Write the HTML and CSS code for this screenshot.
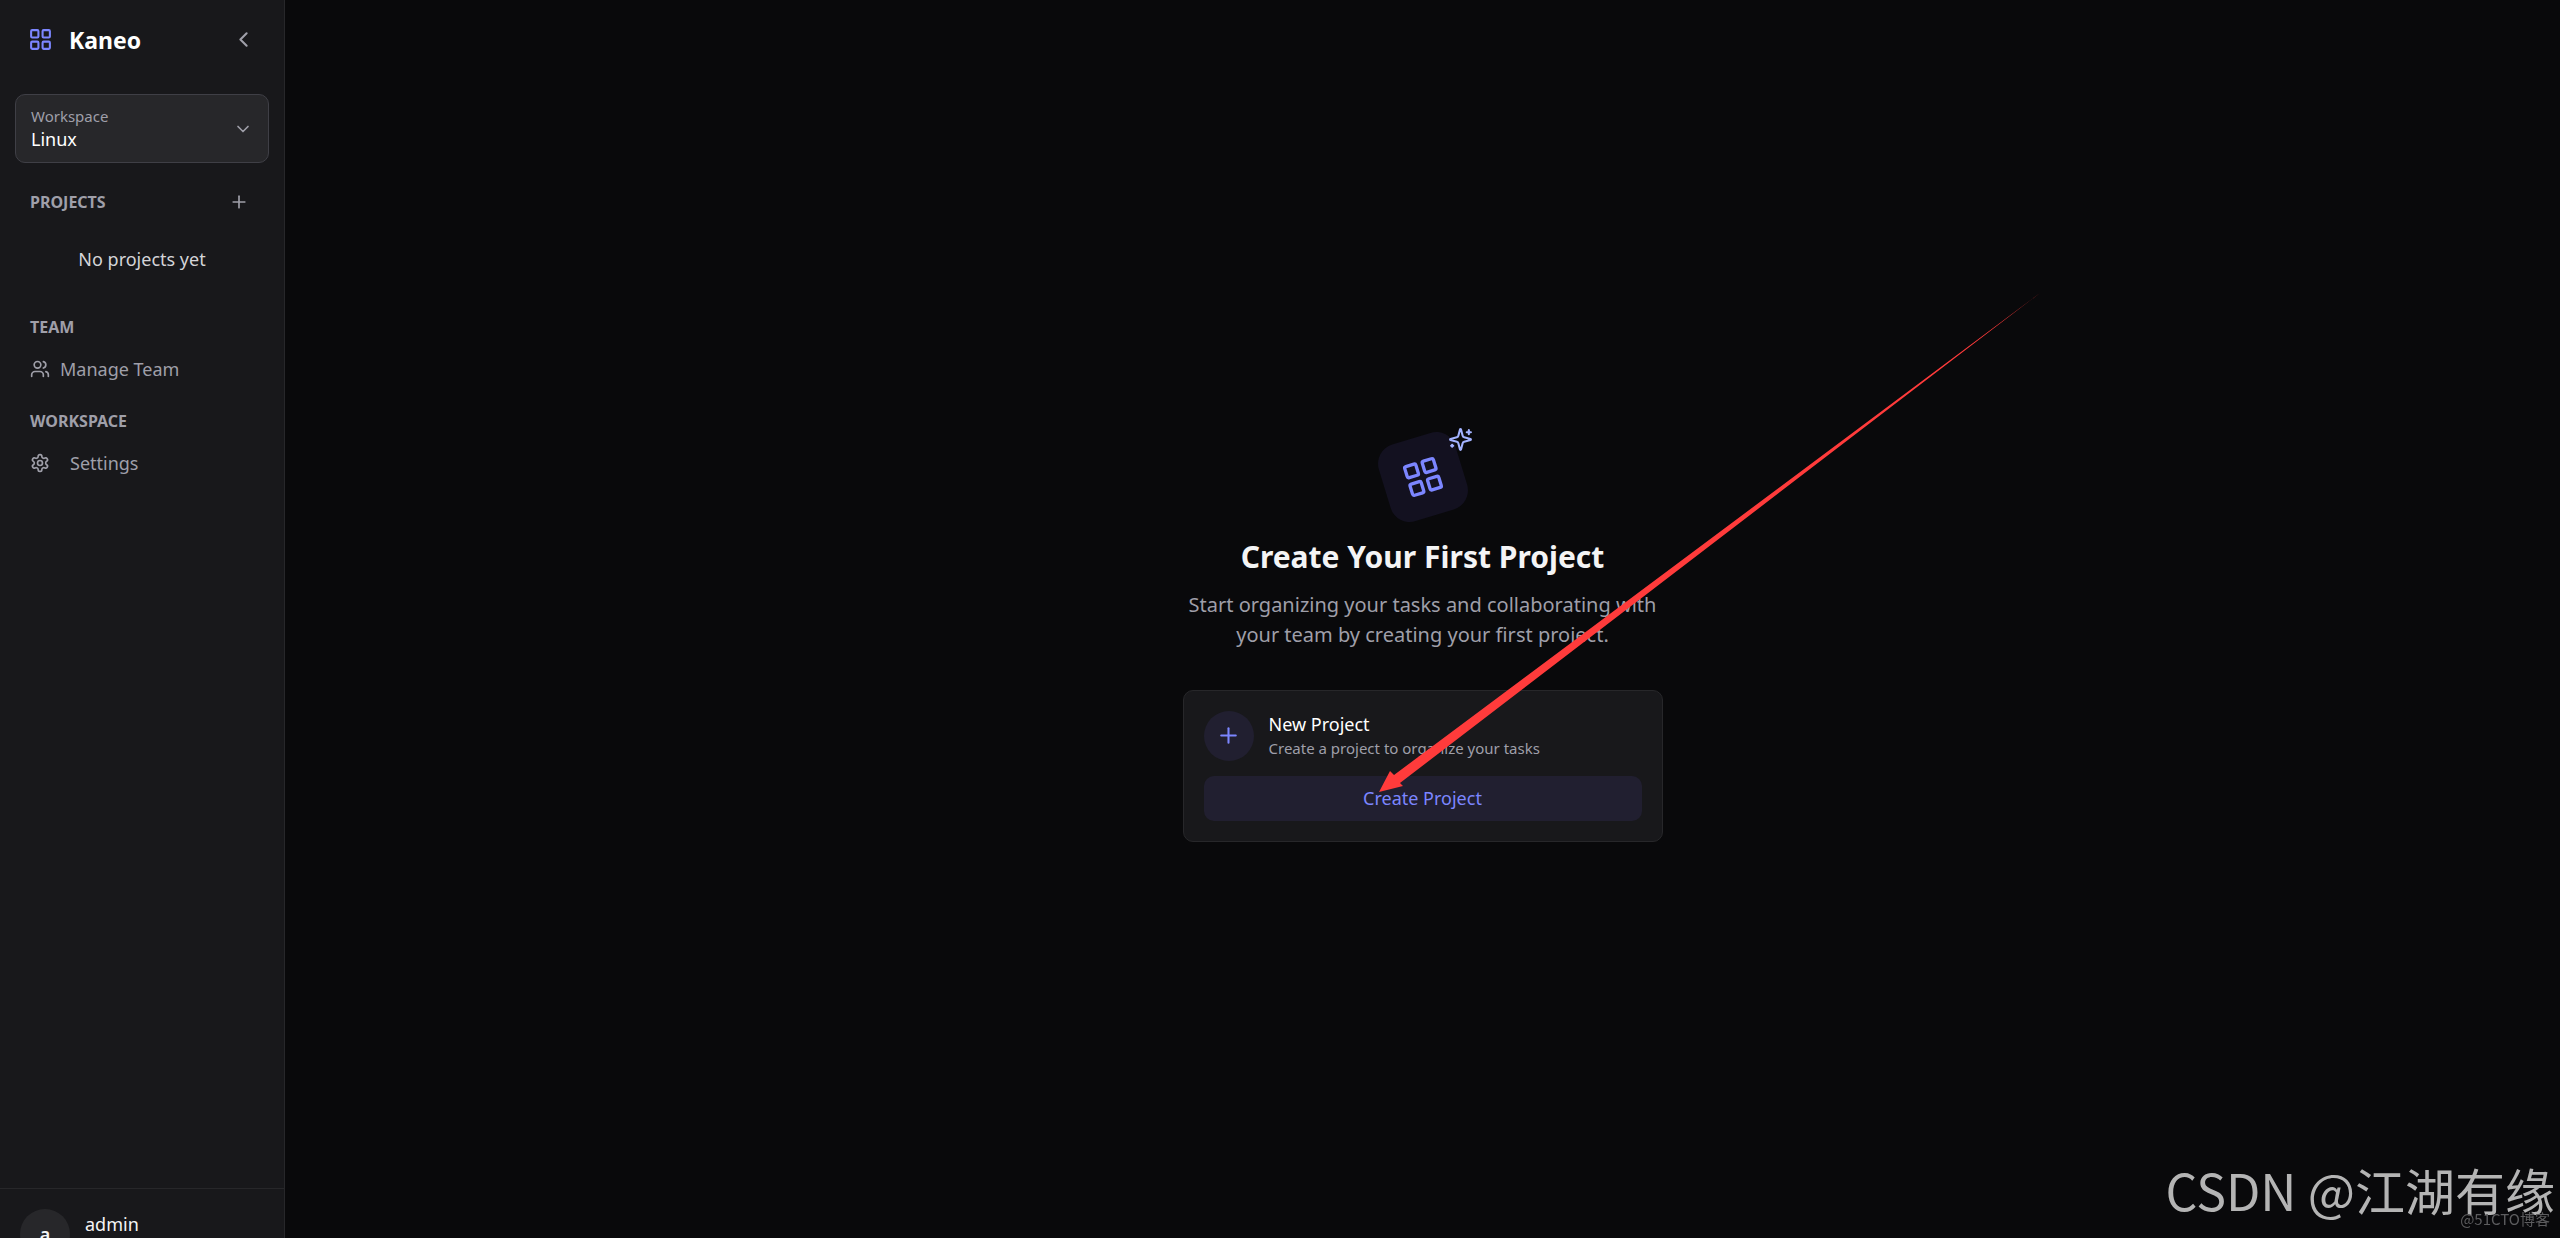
FILE: index.html
```html
<!DOCTYPE html>
<html lang="en">
<head>
  <meta charset="UTF-8" />
  <title>Kaneo</title>
  <link rel="stylesheet" href="styles.css">
</head>
<body>

<div class="app">

  <!-- Sidebar -->
  <aside class="sidebar">
    <div class="sidebar-header">
      <svg class="icon icon-lg logo" viewBox="0 0 24 24"><rect x="3" y="3" width="7" height="7" rx="1"/><rect x="14" y="3" width="7" height="7" rx="1"/><rect x="14" y="14" width="7" height="7" rx="1"/><rect x="3" y="14" width="7" height="7" rx="1"/></svg>
      <span class="brand">Kaneo</span>
      <button class="icon-button" aria-label="Collapse sidebar">
        <svg class="icon icon-lg" viewBox="0 0 24 24"><path d="m15 18-6-6 6-6"/></svg>
      </button>
    </div>

    <button class="workspace-picker">
      <span class="workspace-text">
        <span class="workspace-label">Workspace</span>
        <span class="workspace-name">Linux</span>
      </span>
      <svg class="icon" viewBox="0 0 24 24"><path d="m6 9 6 6 6-6"/></svg>
    </button>

    <nav class="sidebar-nav">
      <div class="section-header">
        <h2>Projects</h2>
        <button class="icon-button" aria-label="Add project">
          <svg class="icon" viewBox="0 0 24 24"><path d="M5 12h14"/><path d="M12 5v14"/></svg>
        </button>
      </div>
      <p class="empty">No projects yet</p>

      <div class="section-header">
        <h2>Team</h2>
      </div>
      <a class="nav-link" href="#team">
        <svg class="icon" viewBox="0 0 24 24"><path d="M16 21v-2a4 4 0 0 0-4-4H6a4 4 0 0 0-4 4v2"/><circle cx="9" cy="7" r="4"/><path d="M22 21v-2a4 4 0 0 0-3-3.870"/><path d="M16 3.130a4 4 0 0 1 0 7.750"/></svg>
        Manage Team
      </a>

      <div class="section-header">
        <h2>Workspace</h2>
      </div>
      <a class="nav-link nav-link-wide" href="#settings">
        <svg class="icon" viewBox="0 0 24 24"><path d="M12.220 2h-.440a2 2 0 0 0-2 2v.180a2 2 0 0 1-1 1.730l-.430.250a2 2 0 0 1-2 0l-.150-.080a2 2 0 0 0-2.730.730l-.220.380a2 2 0 0 0 .730 2.730l.150.100a2 2 0 0 1 1 1.720v.510a2 2 0 0 1-1 1.740l-.150.090a2 2 0 0 0-.730 2.730l.220.380a2 2 0 0 0 2.730.730l.150-.080a2 2 0 0 1 2 0l.430.250a2 2 0 0 1 1 1.730V20a2 2 0 0 0 2 2h.440a2 2 0 0 0 2-2v-.180a2 2 0 0 1 1-1.730l.430-.250a2 2 0 0 1 2 0l.150.080a2 2 0 0 0 2.730-.730l.220-.390a2 2 0 0 0-.730-2.730l-.150-.080a2 2 0 0 1-1-1.740v-.500a2 2 0 0 1 1-1.740l.150-.090a2 2 0 0 0 .730-2.730l-.220-.380a2 2 0 0 0-2.730-.730l-.150.080a2 2 0 0 1-2 0l-.430-.250a2 2 0 0 1-1-1.730V4a2 2 0 0 0-2-2z"/><circle cx="12" cy="12" r="3"/></svg>
        Settings
      </a>
    </nav>

    <div class="user">
      <span class="avatar">a</span>
      <span class="user-name">admin</span>
    </div>
  </aside>

  <!-- Empty state -->
  <main class="content">
    <section class="welcome">
      <div class="hero">
        <div class="hero-tile">
          <svg class="icon icon-xl" viewBox="0 0 24 24"><rect x="3" y="3" width="7" height="7" rx="1"/><rect x="14" y="3" width="7" height="7" rx="1"/><rect x="14" y="14" width="7" height="7" rx="1"/><rect x="3" y="14" width="7" height="7" rx="1"/></svg>
        </div>
        <svg class="icon icon-lg sparkles" viewBox="0 0 24 24"><path d="M9.937 15.500A2 2 0 0 0 8.500 14.063l-6.135-1.582a.5.5 0 0 1 0-.962L8.500 9.936A2 2 0 0 0 9.937 8.500l1.582-6.135a.5.5 0 0 1 .963 0L14.063 8.500A2 2 0 0 0 15.500 9.937l6.135 1.581a.5.5 0 0 1 0 .964L15.500 14.063a2 2 0 0 0-1.437 1.437l-1.582 6.135a.5.5 0 0 1-.963 0z"/><path d="M20 3v4"/><path d="M22 5h-4"/><path d="M4 17v2"/><path d="M5 18H3"/></svg>
      </div>

      <h1>Create Your First Project</h1>
      <p class="intro">Start organizing your tasks and collaborating with your team by creating your first project.</p>

      <div class="card">
        <div class="card-header">
          <span class="card-icon">
            <svg class="icon icon-lg" viewBox="0 0 24 24"><path d="M5 12h14"/><path d="M12 5v14"/></svg>
          </span>
          <div>
            <h3>New Project</h3>
            <p class="card-text">Create a project to organize your tasks</p>
          </div>
        </div>
        <div class="card-action">
          <button class="create-button">Create Project</button>
          <svg class="pointer" viewBox="0 0 661 499"><path d="M0 499 11 478 15 482 661 0 21 490 24 493z"/></svg>
        </div>
      </div>
    </section>
  </main>

</div>

<div class="watermark">CSDN @江湖有缘</div>
<div class="watermark-small">@51CTO博客</div>

</body>
</html>
```

FILE: styles.css
```css
* {
  box-sizing: border-box;
}

body {
  font-family: "Noto Sans", "Noto Sans CJK SC", sans-serif;
  background: #09090b;
  color: #f4f4f5;
  margin: 0;
  height: 100vh;
  overflow: hidden;
}

h1, h2, h3, p {
  margin: 0;
}

button {
  font-family: inherit;
  border: none;
  cursor: pointer;
}

.app {
  display: flex;
  height: calc(100vh + 40px);
}

.icon {
  width: 20px;
  height: 20px;
  flex-shrink: 0;
  fill: none;
  stroke: currentColor;
  stroke-width: 2;
  stroke-linecap: round;
  stroke-linejoin: round;
}

.icon-lg {
  width: 25px;
  height: 25px;
}

.icon-xl {
  width: 40px;
  height: 40px;
}

/* Sidebar */
.sidebar {
  width: 285px;
  flex-shrink: 0;
  display: flex;
  flex-direction: column;
  background: #18181b;
  border-right: 1px solid #27272a;
}

.sidebar-header {
  display: flex;
  align-items: center;
  height: 79px;
  padding: 0 28px;
}

.logo {
  color: #7c86ff;
}

.brand {
  flex: 1;
  margin-left: 16px;
  font-size: 23px;
  font-weight: 700;
  color: #fff;
}

.icon-button {
  display: flex;
  padding: 0;
  background: none;
  color: #9f9fa9;
}

.workspace-picker {
  display: flex;
  align-items: center;
  justify-content: space-between;
  height: 69px;
  margin: 15px 15px 0;
  padding: 0 15px;
  background: #27272a;
  border: 1px solid #3f3f46;
  border-radius: 10px;
  color: #9f9fa9;
  text-align: left;
}

.workspace-text {
  display: flex;
  flex-direction: column;
}

.workspace-label {
  font-size: 15px;
  line-height: 22px;
}

.workspace-name {
  font-size: 18px;
  line-height: 25px;
  color: #fff;
}

.sidebar-nav {
  flex: 1;
  padding: 24px 30px;
}

.section-header {
  display: flex;
  align-items: center;
  justify-content: space-between;
  height: 30px;
  padding-right: 5px;
}

.section-header h2 {
  font-size: 16px;
  line-height: 22px;
  font-weight: 700;
  text-transform: uppercase;
  color: #9f9fa9;
}

.empty {
  padding: 30px 0 40px;
  font-size: 18px;
  line-height: 25px;
  text-align: center;
  color: #d4d4d8;
}

.nav-link {
  display: flex;
  align-items: center;
  gap: 10px;
  height: 54px;
  margin-bottom: 10px;
  font-size: 18px;
  color: #9f9fa9;
  text-decoration: none;
}

.nav-link-wide {
  gap: 20px;
}

.user {
  display: flex;
  gap: 15px;
  height: 90px;
  padding: 20px;
  border-top: 1px solid #27272a;
}

.avatar {
  display: flex;
  align-items: center;
  justify-content: center;
  width: 50px;
  height: 50px;
  border-radius: 50%;
  background: #27272a;
  font-size: 18px;
  font-weight: 600;
}

.user-name {
  font-size: 18px;
  line-height: 30px;
}

/* Empty state */
.content {
  flex: 1;
  display: flex;
  align-items: center;
  justify-content: center;
}

.welcome {
  display: flex;
  flex-direction: column;
  align-items: center;
  width: 480px;
  text-align: center;
}

.hero {
  position: relative;
  margin-bottom: 20px;
}

.hero-tile {
  display: flex;
  align-items: center;
  justify-content: center;
  width: 80px;
  height: 80px;
  border-radius: 20px;
  background: #131120;
  color: #7c86ff;
  transform: rotate(-17deg);
}

.sparkles {
  position: absolute;
  top: -10px;
  right: -10px;
  color: #a3b3ff;
}

h1 {
  font-size: 30px;
  line-height: 40px;
  font-weight: 700;
}

.intro {
  margin: 13px 0 40px;
  font-size: 20px;
  line-height: 30px;
  color: #9f9fa9;
}

.card {
  width: 100%;
  padding: 20px;
  background: #18181b;
  border: 1px solid #27272a;
  border-radius: 10px;
}

.card-header {
  display: flex;
  align-items: center;
  gap: 15px;
  margin-bottom: 15px;
  text-align: left;
}

.card-icon {
  display: flex;
  align-items: center;
  justify-content: center;
  width: 50px;
  height: 50px;
  border-radius: 50%;
  background: #211f30;
  color: #7c86ff;
}

h3 {
  font-size: 18px;
  line-height: 25px;
  font-weight: 400;
  color: #fff;
}

.card-text {
  font-size: 15px;
  line-height: 22px;
  color: #9f9fa9;
}

.card-action {
  position: relative;
}

.create-button {
  display: block;
  width: 100%;
  height: 45px;
  border-radius: 10px;
  background: #211f30;
  font-size: 18px;
  color: #7c86ff;
}

/* Arrow pointing at the create button */
.pointer {
  position: absolute;
  left: 40%;
  bottom: 29px;
  width: 661px;
  height: 499px;
  fill: #ff3b3b;
  pointer-events: none;
}

/* Watermarks */
.watermark,
.watermark-small {
  position: fixed;
  font-family: "Noto Sans CJK SC", sans-serif;
  white-space: nowrap;
}

.watermark {
  right: 5px;
  bottom: 12px;
  font-size: 50px;
  line-height: 74px;
  color: #b4b4b4;
}

.watermark-small {
  right: 10px;
  bottom: 8px;
  font-size: 15px;
  line-height: 22px;
  color: #5c5c5e;
}
```
